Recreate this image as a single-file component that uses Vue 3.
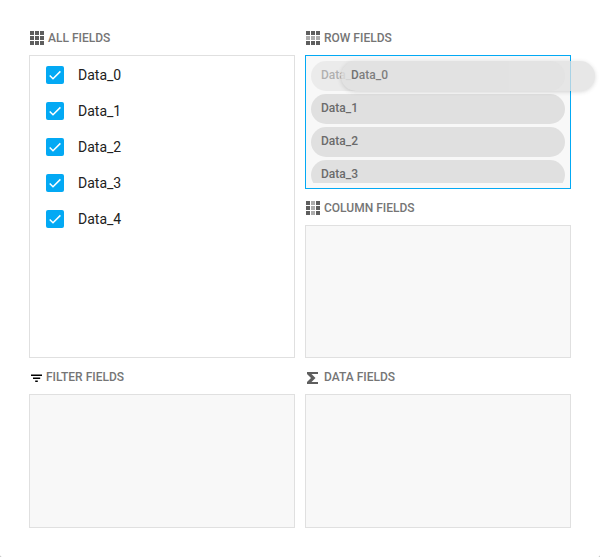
<script setup>
import { ref } from 'vue'

const fields = ref([
  { name: 'Data_0', checked: true },
  { name: 'Data_1', checked: true },
  { name: 'Data_2', checked: true },
  { name: 'Data_3', checked: true },
  { name: 'Data_4', checked: true },
])
const rowFields = ['Data_0', 'Data_1', 'Data_2', 'Data_3']
const dragged = 'Data_0'

// 3x3 icon: cells on the given axis' middle line are lighter
const cells = [0, 1, 2].flatMap((y) => [0, 1, 2].map((x) => ({ x, y })))
</script>

<template>
  <main class="chooser">
    <section class="area all">
      <h2 class="title">
        <svg class="icon" viewBox="0 0 14 14" aria-hidden="true">
          <rect v-for="c in cells" :key="c.x + '-' + c.y" :x="c.x * 5" :y="c.y * 5" width="4" height="4" />
        </svg>
        <span>ALL FIELDS</span>
      </h2>
      <div class="box tree">
        <label v-for="f in fields" :key="f.name" class="option">
          <input v-model="f.checked" type="checkbox" class="check-input" />
          <span class="check" aria-hidden="true">
            <svg v-if="f.checked" viewBox="0 0 18 18"><path d="M3.7 9.5L7 12.8L14.4 5.4" /></svg>
          </span>
          <span>{{ f.name }}</span>
        </label>
      </div>
    </section>

    <section class="area">
      <h2 class="title">
        <svg class="icon" viewBox="0 0 14 14" aria-hidden="true">
          <rect v-for="c in cells" :key="c.x + '-' + c.y" :class="{ light: c.y === 1 }" :x="c.x * 5" :y="c.y * 5" width="4" height="4" />
        </svg>
        <span>ROW FIELDS</span>
      </h2>
      <div class="box drop active">
        <ul class="list">
          <li v-for="name in rowFields" :key="name" class="pill" :class="{ source: name === dragged }">{{ name }}</li>
        </ul>
        <div class="pill ghost">{{ dragged }}</div>
      </div>
    </section>

    <section class="area">
      <h2 class="title">
        <svg class="icon" viewBox="0 0 14 14" aria-hidden="true">
          <rect v-for="c in cells" :key="c.x + '-' + c.y" :class="{ light: c.x === 1 }" :x="c.x * 5" :y="c.y * 5" width="4" height="4" />
        </svg>
        <span>COLUMN FIELDS</span>
      </h2>
      <div class="box drop"></div>
    </section>

    <section class="area">
      <h2 class="title filter">
        <svg class="icon" viewBox="0 0 14 14" aria-hidden="true">
          <path class="dark" d="M1 4.6h11v1.3H1zM3 7.6h7.2v1.3H3zM5.2 10.6h2.6v1.3H5.2z" />
        </svg>
        <span>FILTER FIELDS</span>
      </h2>
      <div class="box drop"></div>
    </section>

    <section class="area">
      <h2 class="title">
        <svg class="icon" viewBox="0 0 14 14" aria-hidden="true">
          <path d="M1 2h11v2H5.5l4 4-4 4H12v2H1v-2l4-4-4-4z" />
        </svg>
        <span>DATA FIELDS</span>
      </h2>
      <div class="box drop"></div>
    </section>
  </main>
</template>

<style>
body {
  background: #b4b4b4;
}
</style>

<style scoped>
.chooser {
  box-sizing: border-box;
  display: grid;
  grid-template-columns: repeat(2, minmax(0, 1fr));
  grid-template-rows: repeat(3, minmax(0, 1fr));
  column-gap: 10px;
  height: 100vh;
  min-height: 400px;
  padding: 19px 29px 29px;
  overflow: hidden;
  background: #fff;
  border-radius: 0 0 2px 2px;
  font-family: Roboto, "Liberation Sans", sans-serif;
  font-size: 14px;
  color: #212121;
}

.area {
  display: flex;
  flex-direction: column;
  min-width: 0;
  min-height: 0;
}

.all {
  grid-row: span 2;
}

.title {
  display: flex;
  flex: none;
  align-items: center;
  gap: 4px;
  height: 36px;
  margin: 0;
  padding: 2px 1px 0;
  box-sizing: border-box;
  font-size: 12px;
  font-weight: 500;
  line-height: 16px;
  white-space: nowrap;
  color: #757575;
}

.title.filter {
  gap: 2px;
}

.icon {
  flex: none;
  width: 14px;
  height: 14px;
  fill: #5e5e5e;
}

.light {
  fill: #acacac;
}

.dark {
  fill: #000;
}

.box {
  flex: 1;
  min-height: 0;
  box-sizing: border-box;
  border: 1px solid #e0e0e0;
}

.tree {
  padding: 1px 16px;
  overflow: hidden;
}

.option {
  position: relative;
  display: flex;
  align-items: center;
  gap: 14px;
  height: 36px;
}

.check-input {
  position: absolute;
  width: 18px;
  height: 18px;
  margin: 0;
  opacity: 0;
}

.check {
  width: 18px;
  height: 18px;
  border-radius: 2px;
  background: #03a9f4;
}

.check svg {
  display: block;
  fill: none;
  stroke: #fff;
  stroke-width: 1.5;
}

.drop {
  position: relative;
  padding: 5px;
  background: #f8f8f8;
}

.active {
  border-color: #03a9f4;
}

.list {
  display: flex;
  flex-direction: column;
  gap: 4px;
  height: 100%;
  margin: 0;
  padding: 0;
  overflow: hidden;
  list-style: none;
}

.pill {
  flex: none;
  box-sizing: border-box;
  height: 30px;
  padding: 0 10px;
  border-radius: 15px;
  background: #e0e0e0;
  font-size: 12px;
  font-weight: 500;
  line-height: 28px;
  color: #6b6b6b;
}

.pill + .pill {
  margin-top: -1px;
}

.source {
  opacity: 0.5;
}

/* The field being dragged floats over the box and past its edge */
.ghost {
  position: absolute;
  top: 5px;
  left: 35px;
  width: calc(100% - 10px);
  opacity: 0.75;
  color: #5a5a5a;
  box-shadow: 0 1px 4px rgba(0, 0, 0, 0.2);
}
</style>
